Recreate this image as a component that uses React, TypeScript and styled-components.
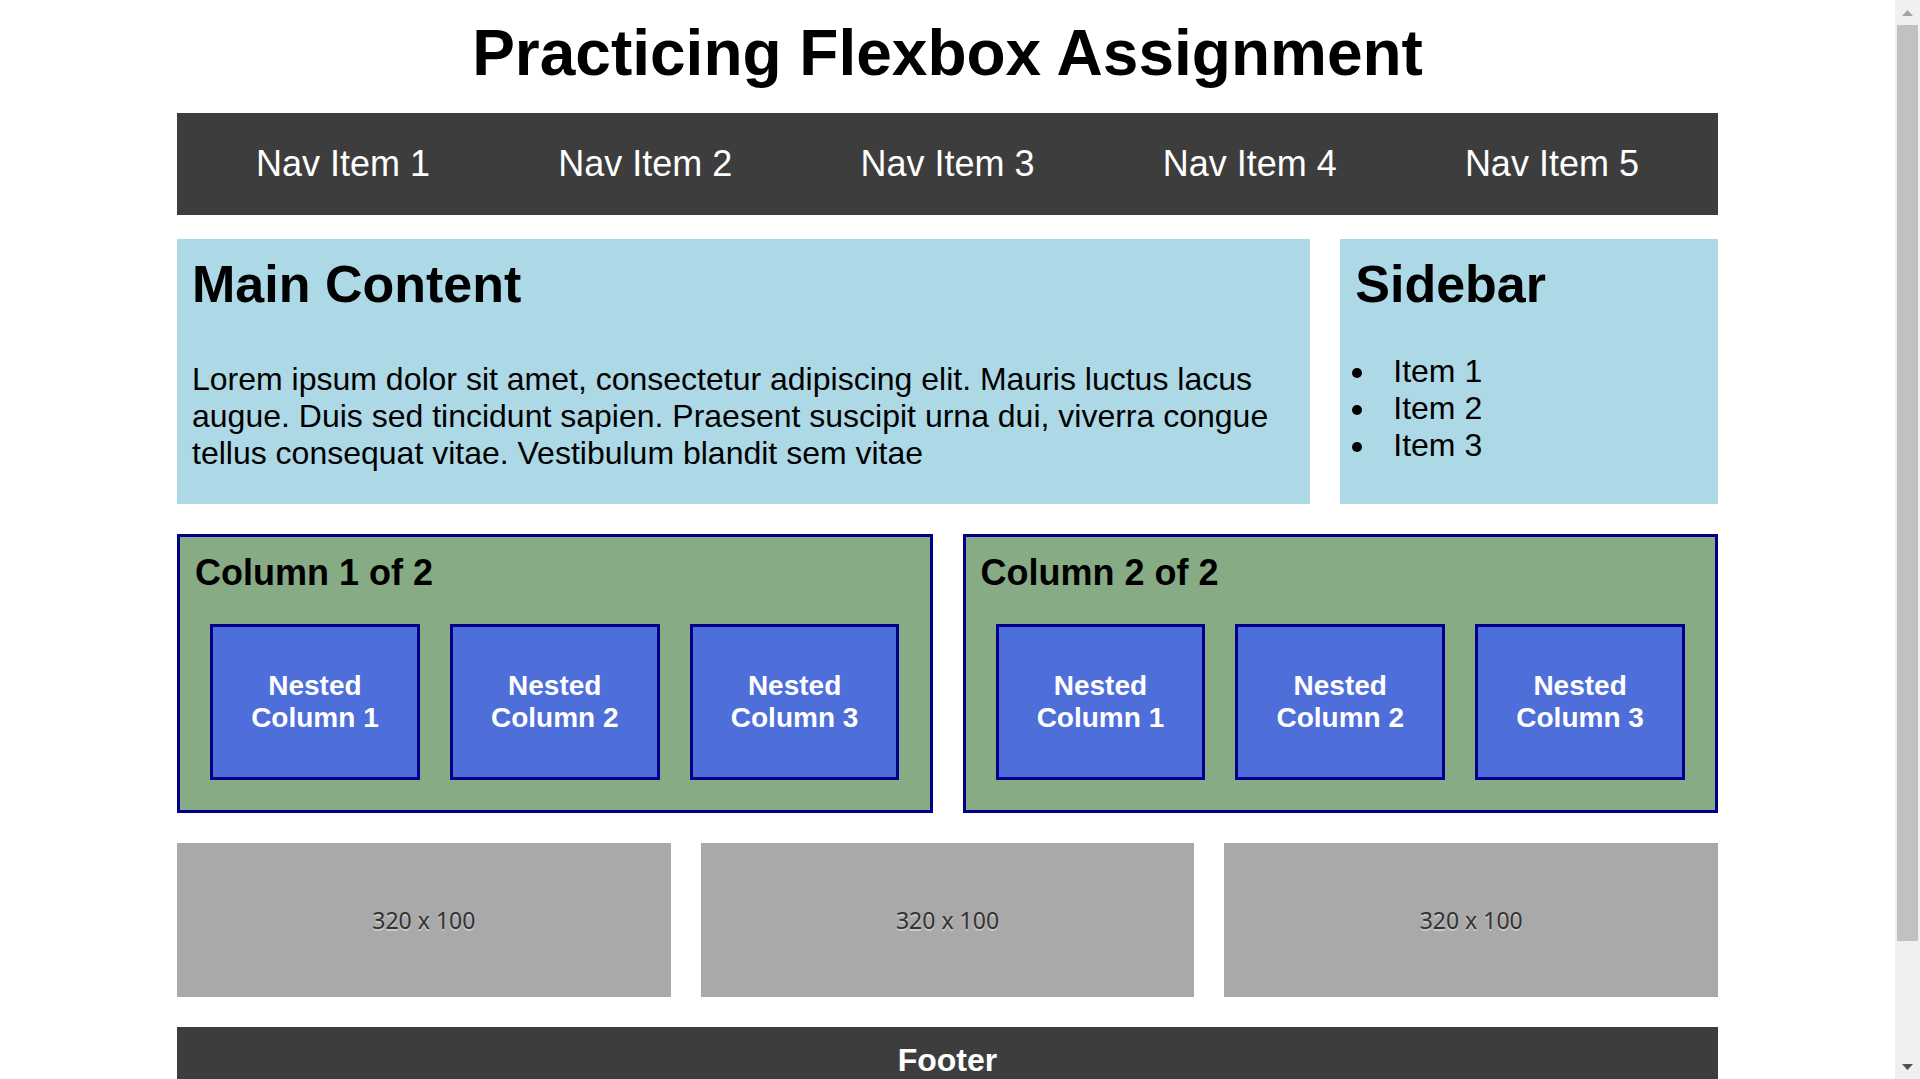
import React from "react";
import styled, { createGlobalStyle } from "styled-components";

const GlobalStyle = createGlobalStyle`
  *, *::before, *::after { box-sizing: border-box; }
  body {
    margin: 0;
    background: #fff;
    color: #000;
    font-family: Arial, "Liberation Sans", sans-serif;
    font-size: 32px;
    line-height: 37px;
  }
  h1, h2, h3, p, ul { margin: 0; padding: 0; }
`;

const Shell = styled.div`
  display: grid;
  grid-template-columns: minmax(0, 1fr) 25px;
  height: 100vh;
  overflow: hidden;
`;

const Viewport = styled.div`
  overflow: hidden;
`;

const Page = styled.div`
  display: flex;
  flex-direction: column;
  gap: 30px;
  max-width: 1541px;
  margin: 0 auto;
  padding-top: 16px;
`;

const Header = styled.header`
  display: flex;
  flex-direction: column;
  gap: 23px;
  margin-bottom: -6px;
`;

const Title = styled.h1`
  font-size: 64px;
  line-height: 74px;
  text-align: center;
`;

const Nav = styled.nav`
  display: flex;
  padding: 30px 15px;
  background: #3d3d3d;
`;

const NavLink = styled.a`
  flex: 1;
  color: #fff;
  font-size: 36px;
  line-height: 42px;
  text-align: center;
  text-decoration: none;
`;

const Row = styled.div`
  display: flex;
  gap: 30px;
`;

const ContentRow = styled.div`
  display: grid;
  grid-template-columns: minmax(0, 3fr) minmax(0, 1fr);
  gap: 30px;
`;

const Panel = styled.section`
  padding: 15px 15px 32px;
  background: #add8e6;
`;

const PanelHeading = styled.h2`
  font-size: 52px;
  line-height: 60px;
`;

const Paragraph = styled.p`
  padding-top: 47px;
`;

const List = styled.ul`
  padding: 39px 0 0 23px;
`;

const ListItem = styled.li`
  padding-left: 15px;
`;

const Column = styled.section`
  flex: 1 1 0;
  min-width: 0;
  padding: 15px;
  border: 3px solid #00008b;
  background: #86ab85;
`;

const ColumnHeading = styled.h3`
  font-size: 36px;
  line-height: 42px;
`;

const NestedRow = styled(Row)`
  padding: 30px 15px 15px;
`;

const Nested = styled.div`
  flex: 1 1 0;
  min-width: 0;
  padding: 43px 15px;
  border: 3px solid #00008b;
  background: #4e6eda;
  color: #fff;
  font-size: 28px;
  font-weight: bold;
  line-height: 32px;
  text-align: center;
`;

const Placeholder = styled.div`
  display: flex;
  flex: 1 1 0;
  align-items: center;
  justify-content: center;
  aspect-ratio: 320 / 100;
  background: #a9a9a9;
  color: #333;
  font-family: "Noto Sans", "Open Sans", sans-serif;
  font-size: 23px;
  text-shadow: 0 2px 1px #ccc;
`;

const Footer = styled.footer`
  padding: 15px;
  background: #3d3d3d;
  color: #fff;
  font-weight: bold;
  text-align: center;
`;

const Scrollbar = styled.div`
  display: grid;
  grid-template-rows: 25px 1fr 25px;
  padding: 0 2px;
  background: #f0f0f0;
`;

const Track = styled.div`
  display: flex;
`;

const Thumb = styled.div`
  flex: 1;
  height: 89%;
  background: #c1c1c1;
`;

const Arrow = styled.svg`
  display: block;
  width: 11px;
  height: 6px;
  margin: 10px auto 0;
`;

const navItems = [1, 2, 3, 4, 5];
const thirds = [1, 2, 3];

export default function App() {
  return (
    <Shell>
      <GlobalStyle />
      <Viewport>
        <Page>
          <Header>
            <Title>Practicing Flexbox Assignment</Title>
            <Nav>
              {navItems.map((n) => (
                <NavLink key={n} href="#">
                  Nav Item {n}
                </NavLink>
              ))}
            </Nav>
          </Header>
          <ContentRow>
            <Panel>
              <PanelHeading>Main Content</PanelHeading>
              <Paragraph>
                Lorem ipsum dolor sit amet, consectetur adipiscing elit. Mauris luctus lacus augue. Duis
                sed tincidunt sapien. Praesent suscipit urna dui, viverra congue tellus consequat vitae.
                Vestibulum blandit sem vitae
              </Paragraph>
            </Panel>
            <Panel>
              <PanelHeading>Sidebar</PanelHeading>
              <List>
                {thirds.map((n) => (
                  <ListItem key={n}>Item {n}</ListItem>
                ))}
              </List>
            </Panel>
          </ContentRow>
          <Row>
            {[1, 2].map((c) => (
              <Column key={c}>
                <ColumnHeading>Column {c} of 2</ColumnHeading>
                <NestedRow>
                  {thirds.map((n) => (
                    <Nested key={n}>Nested Column {n}</Nested>
                  ))}
                </NestedRow>
              </Column>
            ))}
          </Row>
          <Row>
            {thirds.map((n) => (
              <Placeholder key={n}>320 x 100</Placeholder>
            ))}
          </Row>
          <Footer>Footer</Footer>
        </Page>
      </Viewport>
      <Scrollbar aria-hidden="true">
        <Arrow viewBox="0 0 11 6">
          <path d="M5.5 0 L11 6 H0 Z" fill="#a3a3a3" />
        </Arrow>
        <Track>
          <Thumb />
        </Track>
        <Arrow viewBox="0 0 11 6">
          <path d="M0 0 H11 L5.5 6 Z" fill="#505050" />
        </Arrow>
      </Scrollbar>
    </Shell>
  );
}
